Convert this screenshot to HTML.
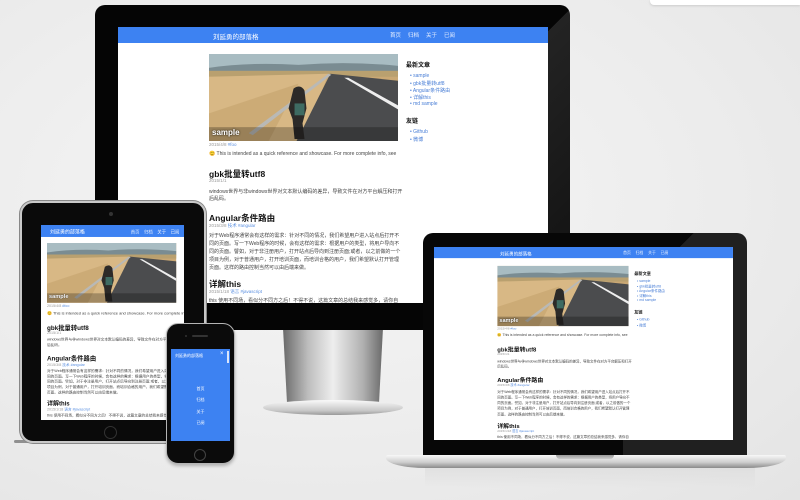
<!DOCTYPE html>
<html><head><meta charset="utf-8">
<style>
*{margin:0;padding:0;box-sizing:border-box}
body{width:800px;height:500px;overflow:hidden;background:radial-gradient(ellipse at 40% 40%,#f6f6f6 0%,#ececec 60%,#e4e4e4 100%);font-family:"Liberation Sans","Noto Sans CJK SC",sans-serif;position:relative}
.abs{position:absolute}
.site{position:absolute;left:0;top:0;width:430px;background:#fff;overflow:hidden;transform-origin:0 0}
.nav{position:absolute;left:0;top:0;width:100%;height:16px;background:#3d82f2}
.nav .t{position:absolute;left:95px;top:4px;font-size:6.5px;color:#fff}
.nav .l{position:absolute;top:4px;font-size:5.5px;color:#e8f0ff}
.site .p{position:absolute;font-size:5px;color:#444;white-space:nowrap}
.site .d{position:absolute;font-size:4.5px;color:#999;white-space:nowrap}
.site .d b{color:#5a8fe0;font-weight:normal}
.site .h{position:absolute;font-size:8.5px;font-weight:bold;color:#111;white-space:nowrap}
.site .s{position:absolute;font-size:5px;color:#4a7fd6;white-space:nowrap}
.site .sh{position:absolute;font-size:6px;font-weight:bold;color:#111}
.cap{position:absolute;color:#fff;font-weight:bold;font-size:8px;text-shadow:0 0 2px #000}
</style></head><body>
<svg width="0" height="0" style="position:absolute">
<defs>
<symbol id="ph" viewBox="0 0 190 88" preserveAspectRatio="none">
<rect width="190" height="88" fill="#caa874"/>
<rect width="190" height="14" fill="#a8bcc2"/>
<path d="M0 14 Q40 8 90 11 Q140 7 190 12 L190 18 L0 18Z" fill="#7a8c92"/>
<rect y="17" width="190" height="6" fill="#b9a06f"/>
<path d="M0 23 L120 20 L95 88 L0 88Z" fill="#d8b885"/>
<path d="M0 60 L90 30 L60 88 L0 88Z" fill="#c09d68" opacity=".5"/>
<path d="M122 20 L190 27 L190 88 L88 88Z" fill="#4b4c4e"/>
<path d="M140 24 L190 52 L190 56 L136 24Z" fill="#eee"/>
<path d="M120 20 L40 80 L44 82 L123 21Z" fill="#b9b9b6"/>
<path d="M85 35 Q92 30 96 37 L98 55 L94 70 L96 86 L86 86 L84 66 L80 55Z" fill="#2c2a28"/>
<path d="M86 50 L96 50 L96 62 L86 62Z" fill="#3e6b62"/>
<rect y="74" width="190" height="14" fill="#000" opacity=".25"/>
</symbol>
</defs>
</svg>

<div class="abs" style="left:650px;top:0;width:150px;height:5px;background:#fff;border-radius:0 0 0 4px;box-shadow:0 1px 2px #ccc"></div>

<!-- MONITOR stand -->
<div class="abs" style="left:283px;top:328px;width:100px;height:75px;background:linear-gradient(90deg,#6a6a6a 0%,#bdbdbd 25%,#eee 50%,#b0b0b0 80%,#6a6a6a 100%);clip-path:polygon(0 0,100% 0,96% 100%,4% 100%)"></div>
<div class="abs" style="left:263px;top:400px;width:140px;height:15px;border-radius:50%;background:linear-gradient(#fafafa,#c8c8c8 70%,#999)"></div>
<!-- MONITOR -->
<div class="abs" style="left:95px;top:5px;width:475px;height:325px;background:#050505;border-radius:10px;overflow:hidden">
  <div class="abs" style="left:340px;top:0;width:140px;height:325px;background:linear-gradient(135deg,transparent 0 30%,rgba(255,255,255,.12) 30%,rgba(255,255,255,.04) 100%)"></div>
</div>
<div class="abs" style="left:118px;top:27px;width:430px;height:276px;overflow:hidden;background:#fff">
 <div class="site" id="m" style="height:276px">
  <div class="nav"><span class="t">刘延勇的部落格</span><span class="l" style="left:272px">首页</span><span class="l" style="left:290px">归档</span><span class="l" style="left:308px">关于</span><span class="l" style="left:326px">已阅</span></div>
  <svg class="abs" style="left:91px;top:27px" width="189" height="87"><use href="#ph"/></svg>
  <div class="cap" style="left:94px;top:101px">sample</div>
  <div class="d" style="left:91px;top:115px">2015/4/8 <b>#foo</b></div>
  <div class="p" style="left:91px;top:124px">😊 This is intended as a quick reference and showcase. For more complete info, see</div>
  <div class="h" style="left:91px;top:141px">gbk批量转utf8</div>
  <div class="d" style="left:91px;top:151px">2015/1/1</div>
  <div class="p" style="left:91px;top:161px">windows世界与非windows世界对文本默认编码的差异，导致文件在对方平台解压和打开</div>
  <div class="p" style="left:91px;top:168px">后乱码。</div>
  <div class="h" style="left:91px;top:185px">Angular条件路由</div>
  <div class="d" style="left:91px;top:196px">2015/3/8 <b>技术 #angular</b></div>
  <div class="p" style="left:91px;top:205px">对于Web程序通常会有这样的需求：针对不同的情况，我们希望用户进入站点后打开不</div>
  <div class="p" style="left:91px;top:213px">同的页面。写一下Web程序的时候，会有这样的需求：根据用户的类型，将用户导向不</div>
  <div class="p" style="left:91px;top:221px">同的页面。譬如，对于非注册用户，打开站点后导向到注册页面;或者，以之前做的一个</div>
  <div class="p" style="left:91px;top:229px">项目为例，对于普通用户，打开培训页面，而培训合格的用户，我们希望默认打开管理</div>
  <div class="p" style="left:91px;top:237px">页面。这样的路由控制当然可以由后端来做。</div>
  <div class="h" style="left:91px;top:251px">详解this</div>
  <div class="d" style="left:91px;top:262px">2015/1/18 <b>语言 #javascript</b></div>
  <div class="p" style="left:91px;top:270px">this 使用不同场，看似分不同方之后！不得不说，这篇文章的总结我来感觉多，请你自</div>
  <div class="sh" style="left:288px;top:33px">最新文章</div>
  <div class="s" style="left:292px;top:46px">• sample</div>
  <div class="s" style="left:292px;top:53px">• gbk批量转utf8</div>
  <div class="s" style="left:292px;top:60px">• Angular条件路由</div>
  <div class="s" style="left:292px;top:67px">• 详解this</div>
  <div class="s" style="left:292px;top:74px">• md sample</div>
  <div class="sh" style="left:288px;top:89px">友链</div>
  <div class="s" style="left:292px;top:102px">• Github</div>
  <div class="s" style="left:292px;top:109px">• 微博</div>
 </div>
</div>

<!-- LAPTOP -->
<div class="abs" style="left:425px;top:468px;width:330px;height:20px;background:linear-gradient(#ddd,rgba(230,230,230,0));opacity:.7"></div>
<div class="abs" style="left:423px;top:233px;width:324px;height:224px;background:#070707;border-radius:10px 10px 0 0;overflow:hidden">
 <div class="abs" style="left:200px;top:0;width:130px;height:224px;background:linear-gradient(135deg,transparent 0 20%,rgba(255,255,255,.1) 20%)"></div>
</div>
<div class="abs" style="left:434px;top:247px;width:299px;height:193px;overflow:hidden;background:#fff">
 <div style="transform:scale(0.6953);transform-origin:0 0;width:430px;height:278px;position:relative" id="lap"></div>
</div>
<div class="abs" style="left:386px;top:455px;width:400px;height:13px;background:linear-gradient(#f8f8f8,#cfcfcf 55%,#8a8a8a);border-radius:2px 2px 40px 40px/2px 2px 10px 10px"></div>
<div class="abs" style="left:556px;top:455px;width:58px;height:4px;background:linear-gradient(#999,#ccc);border-radius:0 0 5px 5px"></div>

<!-- TABLET -->
<div class="abs" style="left:14px;top:440px;width:150px;height:3px;background:#555;opacity:.6;border-radius:2px"></div>
<div class="abs" style="left:20px;top:201px;width:186px;height:242px;background:#0a0a0a;border-radius:13px;border:2px solid #c9c9c9;box-shadow:0 0 0 1px #888"></div>
<div class="abs" style="left:109px;top:212px;width:4px;height:4px;border-radius:50%;background:#333"></div>
<div class="abs" style="left:104px;top:426px;width:13px;height:13px;border-radius:50%;border:1.5px solid #333"></div>
<div class="abs" style="left:41px;top:225px;width:143px;height:195px;overflow:hidden;background:#fff">
 <div class="site" style="height:585px;transform:scale(0.3326)">
  <div class="nav" style="height:36px"><span class="t" style="left:27px;top:10px;font-size:15px">刘延勇的部落格</span><span class="l" style="left:270px;top:11px;font-size:13px">首页</span><span class="l" style="left:310px;top:11px;font-size:13px">归档</span><span class="l" style="left:350px;top:11px;font-size:13px">关于</span><span class="l" style="left:390px;top:11px;font-size:13px">已阅</span></div>
  <svg class="abs" style="left:18px;top:54px" width="389" height="180"><use href="#ph"/></svg>
  <div class="cap" style="left:24px;top:205px;font-size:17px">sample</div>
  <div class="d" style="left:18px;top:238px;font-size:11px">2015/4/8 <b>#foo</b></div>
  <div class="p" style="left:18px;top:258px;font-size:12px">😊 This is intended as a quick reference and showcase. For more complete info, see</div>
  <div class="h" style="left:18px;top:294px;font-size:19px">gbk批量转utf8</div>
  <div class="d" style="left:18px;top:318px;font-size:11px">2015/1/1</div>
  <div class="p" style="left:18px;top:336px;font-size:11px">windows世界与非windows世界对文本默认编码的差异，导致文件在对方平台解压和打开</div>
  <div class="p" style="left:18px;top:352px;font-size:11px">后乱码。</div>
  <div class="h" style="left:18px;top:386px;font-size:19px">Angular条件路由</div>
  <div class="d" style="left:18px;top:412px;font-size:11px">2015/3/8 <b>技术 #angular</b></div>
  <div class="p" style="left:18px;top:430px;font-size:11px">对于Web程序通常会有这样的需求：针对不同的情况，我们希望用户进入站点后打开不</div>
  <div class="p" style="left:18px;top:446px;font-size:11px">同的页面。写一下Web程序的时候，会有这样的需求：根据用户的类型，将用户导向不</div>
  <div class="p" style="left:18px;top:462px;font-size:11px">同的页面。譬如，对于非注册用户，打开站点后导向到注册页面;或者，以之前做的</div>
  <div class="p" style="left:18px;top:478px;font-size:11px">项目为例，对于普通用户，打开培训页面，而培训合格的用户，我们希望默认打开管理</div>
  <div class="p" style="left:18px;top:494px;font-size:11px">页面。这样的路由控制当然可以由后端来做。</div>
  <div class="h" style="left:18px;top:522px;font-size:18px">详解this</div>
  <div class="d" style="left:18px;top:546px;font-size:11px">2015/1/18 <b>语言 #javascript</b></div>
  <div class="p" style="left:18px;top:564px;font-size:11px">this 使用不同场，看似分不同方之后！不得不说，这篇文章的总结我来感觉多</div>
 </div>
</div>

<!-- PHONE -->
<div class="abs" style="left:166px;top:323px;width:69px;height:141px;background:#0b0b0b;border-radius:12px;border:1.5px solid #b5b5b5;box-shadow:0 2px 3px rgba(0,0,0,.25)"></div>
<div class="abs" style="left:192px;top:335px;width:16px;height:2px;border-radius:1px;background:#333"></div>
<div class="abs" style="left:185px;top:335px;width:2px;height:2px;border-radius:50%;background:#333"></div>
<div class="abs" style="left:194px;top:449px;width:12px;height:12px;border-radius:50%;border:1.5px solid #444"></div>
<div class="abs" style="left:171px;top:349px;width:59px;height:92px;background:#3d82f2;overflow:hidden;color:#fff;font-size:4px">
 <div class="abs" style="left:4px;top:4px">刘延勇的部落格</div>
 <div class="abs" style="left:49px;top:2px;font-size:6px">×</div>
 <div class="abs" style="left:56px;top:2px;width:2px;height:12px;background:#dbe6fb"></div>
 <div class="abs" style="left:0;width:59px;text-align:center;top:37px">首页</div>
 <div class="abs" style="left:0;width:59px;text-align:center;top:48px">归档</div>
 <div class="abs" style="left:0;width:59px;text-align:center;top:60px">关于</div>
 <div class="abs" style="left:0;width:59px;text-align:center;top:71px">已阅</div>
</div>

<script>
document.getElementById('lap').innerHTML=document.getElementById('m').outerHTML.replace('id="m"','');
</script>
</body></html>
